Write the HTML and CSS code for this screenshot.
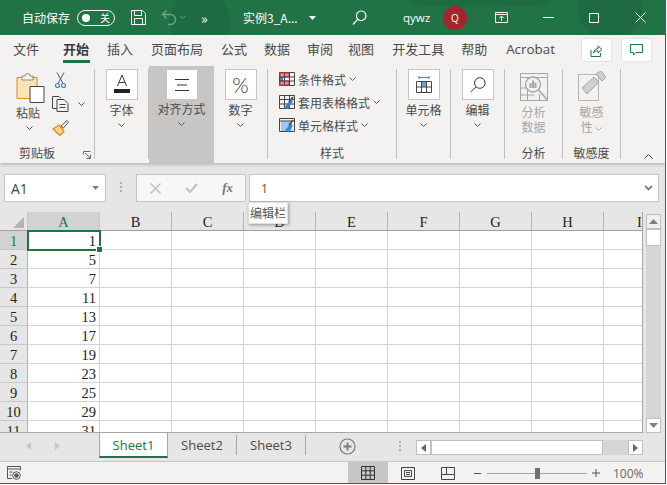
FILE: index.html
```html
<!DOCTYPE html>
<html lang="zh-CN">
<head>
<meta charset="utf-8">
<title>实例3 - Excel</title>
<link rel="stylesheet" href="styles.css">
</head>
<body>
<div class="app">
  <header class="titlebar">
    <span class="autosave">自动保存</span>
    <span class="toggle"><i class="knob"></i><span class="toggle-t">关</span></span>
    <svg class="save" width="17" height="17" viewBox="0 0 17 17" fill="none" stroke="#fff"><path d="M1.5 1.5h11l3 3v11h-14z"/><path d="M4.5 1.5v5h7v-5M4.5 15.5v-6h8v6"/></svg>
    <svg class="undo" width="16" height="17" viewBox="0 0 16 17" fill="none" stroke="#6fa787" stroke-width="1.3"><path d="M5.5 1.5 1.5 5.5l4 4M1.5 5.5h8a4.5 4.5 0 0 1 0 10H7"/></svg>
    <svg class="undo-c" width="7" height="5" viewBox="0 0 7 5" fill="none" stroke="#5b9a76"><path d="M.5.5l3 3 3-3"/></svg>
    <span class="more">»</span>
    <span class="doc">实例3_A...</span>
    <svg class="doc-c" width="7" height="4" viewBox="0 0 7 4"><path d="M0 0h7L3.5 4z" fill="#fff"/></svg>
    <svg class="search" width="15" height="16" viewBox="0 0 15 16" fill="none" stroke="#fff" stroke-width="1.2"><circle cx="9.2" cy="5.8" r="4.8"/><path d="M5.8 9.2 1 14.5"/></svg>
    <span class="user">qywz</span>
    <span class="avatar">Q</span>
    <svg class="display" width="13" height="11" viewBox="0 0 13 11" fill="none" stroke="#fff"><path d="M.5.500h12v10H.5zM.5 2.500h12M6.500 9V4.500M4.500 6l2-2 2 2"/></svg>
    <svg class="min" width="11" height="1" viewBox="0 0 11 1"><path d="M0 .5h11" stroke="#fff"/></svg>
    <svg class="max" width="10" height="10" viewBox="0 0 10 10" fill="none" stroke="#fff"><path d="M.5.500h9v9h-9z"/></svg>
    <svg class="close" width="11" height="11" viewBox="0 0 11 11" fill="none" stroke="#fff"><path d="M.5.500l10 10M10.500.5l-10 10"/></svg>
  </header>

  <nav class="tabs">
    <span class="tab t-file">文件</span>
    <span class="tab t-home">开始</span>
    <span class="tab t-ins">插入</span>
    <span class="tab t-page">页面布局</span>
    <span class="tab t-form">公式</span>
    <span class="tab t-data">数据</span>
    <span class="tab t-rev">审阅</span>
    <span class="tab t-view">视图</span>
    <span class="tab t-dev">开发工具</span>
    <span class="tab t-help">帮助</span>
    <span class="tab t-acro">Acrobat</span>
    <span class="tbtn t-share"><svg width="13" height="13" viewBox="0 0 13 13" fill="none" stroke="#217346"><path d="M1 6v6.500h9.500V9"/><path d="M3.500 9C4 6 6 4.500 8 4.500V2l4 3.500L8 9V6.800C6 6.800 4.500 7.500 3.500 9z"/></svg></span>
    <span class="tbtn t-comment"><svg width="13" height="12" viewBox="0 0 13 12" fill="none" stroke="#217346"><path d="M.5.500h12v8H6L3.500 11V8.500h-3z"/></svg></span>
  </nav>

  <section class="ribbon">
    <div class="grp g-clip"><div class="in">
      <div class="clip-row">
        <div class="paste">
          <svg width="29" height="30" viewBox="0 0 29 30"><path d="M1 4.500h20v21H1z" fill="#fde3b8" stroke="#e8871e"/><path d="M6 3h3a2.500 2.500 0 0 1 5 0h3v4H6z" fill="#f3f2f1" stroke="#8a8a8a"/><path d="M14 13.500h14v16H14z" fill="#fff" stroke="#444"/></svg>
          <span class="lb p-lb">粘贴</span>
          <svg class="chev" width="7" height="4" viewBox="0 0 7 4" fill="none" stroke="#555"><path d="M.5.500l3 3 3-3"/></svg>
        </div>
        <div class="clip-tools">
          <svg width="11" height="16" viewBox="0 0 11 16" fill="none"><path d="M2 .5l6 11M9 .5l-6 11" stroke="#555"/><circle cx="2.500" cy="13.500" r="2" stroke="#2b88d8" stroke-width="1.200"/><circle cx="8.500" cy="13.500" r="2" stroke="#2b88d8" stroke-width="1.200"/></svg>
          <div class="copy"><svg width="17" height="16" viewBox="0 0 17 16" fill="none" stroke="#444"><path d="M5 12.500H.5V.5H7l2 2"/><path d="M5 3.500h7l4 4v8H5zM7.500 8.500h6M7.500 11.500h6"/></svg><svg class="chev" width="7" height="4" viewBox="0 0 7 4" fill="none" stroke="#555"><path d="M.5.500l3 3 3-3"/></svg></div>
          <svg width="17" height="16" viewBox="0 0 17 16"><path d="M1 9l6-4 5 6-4 4.500z" fill="#fbd38d" stroke="#e8871e" stroke-width="1.300"/><path d="M9 6l6-5.500 1.500 1.500-5 6z" fill="#f3f2f1" stroke="#555"/></svg>
        </div>
      </div>
      <span class="lb g-lb">剪贴板</span>
      <svg class="launch" width="8" height="8" viewBox="0 0 8 8" fill="none" stroke="#666"><path d="M.5 3.500v-3h7M2 2l5 5M7.500 3.500v4h-4"/></svg>
    </div></div>

    <div class="grp g-font"><div class="in">
      <div class="box"><svg width="16" height="22" viewBox="0 0 16 22"><path d="M3.500 12 8 1l4.500 11M5 8.500h6" fill="none" stroke="#333"/><path d="M0 15h16v4H0z" fill="#222"/></svg></div>
      <span class="lb big-lb">字体</span>
      <svg class="chev-b" width="7" height="4" viewBox="0 0 7 4" fill="none" stroke="#555"><path d="M.5.500l3 3 3-3"/></svg>
    </div></div>

    <div class="grp g-align"><div class="in plain">
      <div class="box nob"><svg width="14" height="14" viewBox="0 0 14 14" stroke="#333"><path d="M0 1.500h14M2 7h10M0 12.500h14"/></svg></div>
      <span class="lb big-lb">对齐方式</span>
      <svg class="chev-b" width="7" height="4" viewBox="0 0 7 4" fill="none" stroke="#555"><path d="M.5.500l3 3 3-3"/></svg>
    </div></div>

    <div class="grp g-num"><div class="in">
      <div class="box pct">%</div>
      <span class="lb big-lb">数字</span>
      <svg class="chev-b" width="7" height="4" viewBox="0 0 7 4" fill="none" stroke="#555"><path d="M.5.500l3 3 3-3"/></svg>
    </div></div>

    <div class="grp g-style"><div class="in">
      <div class="style-list">
        <div class="srow"><svg width="16" height="14" viewBox="0 0 16 14" fill="none"><path d="M.5.500h15v13H.5z" stroke="#444"/><path d="M1 1h3v12H1z" fill="#2b88d8"/><path d="M1 1h9v4H1zM1 9h9v4H1z" fill="#f28a8a" stroke="#d13438"/><path d="M5.500 1v12M10.500 1v12M1 5h14M1 9h14" stroke="#444"/></svg><span>条件格式</span><svg class="chev" width="7" height="4" viewBox="0 0 7 4" fill="none" stroke="#555"><path d="M.5.500l3 3 3-3"/></svg></div>
        <div class="srow"><svg width="16" height="15" viewBox="0 0 16 15" fill="none"><path d="M.5.500h15v13H.5zM.5 4.500h15M.5 9h15M5.500 1v12M10.500 1v12" stroke="#444"/><path d="M5 13l6-8 3 1-5 8z" fill="#2b88d8"/><path d="M10 7l4-5" stroke="#555" stroke-width="2"/></svg><span>套用表格格式</span><svg class="chev" width="7" height="4" viewBox="0 0 7 4" fill="none" stroke="#555"><path d="M.5.500l3 3 3-3"/></svg></div>
        <div class="srow"><svg width="16" height="15" viewBox="0 0 16 15" fill="none"><path d="M2 3h11v10H2z" fill="#9cc9ef"/><path d="M.5.500h15v13H.5zM.5 3h15" stroke="#444"/><path d="M6 13l5-7 3 1-4 7z" fill="#2b88d8"/><path d="M10 7l4-5" stroke="#555" stroke-width="2"/></svg><span>单元格样式</span><svg class="chev" width="7" height="4" viewBox="0 0 7 4" fill="none" stroke="#555"><path d="M.5.500l3 3 3-3"/></svg></div>
      </div>
      <span class="lb g-lb">样式</span>
    </div></div>

    <div class="grp g-cell"><div class="in">
      <div class="box"><svg width="16" height="17" viewBox="0 0 16 17" fill="none"><path d="M5.500 5h5v6h-5z" fill="#5ea7e4"/><path d="M.5 5.500h15v11H.5zM.5 11h15M5.500 5.500v11M10.500 5.500v11" stroke="#444"/><path d="M3 1.500h10M3 0v3M13 0v3" stroke="#2b88d8"/></svg></div>
      <span class="lb big-lb">单元格</span>
      <svg class="chev-b" width="7" height="4" viewBox="0 0 7 4" fill="none" stroke="#555"><path d="M.5.500l3 3 3-3"/></svg>
    </div></div>

    <div class="grp g-edit"><div class="in">
      <div class="box"><svg width="16" height="16" viewBox="0 0 16 16" fill="none" stroke="#333"><circle cx="9.800" cy="6" r="5.300"/><path d="M6 10 .5 15"/></svg></div>
      <span class="lb big-lb">编辑</span>
      <svg class="chev-b" width="7" height="4" viewBox="0 0 7 4" fill="none" stroke="#555"><path d="M.5.500l3 3 3-3"/></svg>
    </div></div>

    <div class="grp g-ana"><div class="in">
      <svg class="ana-i" width="28" height="28" viewBox="0 0 28 28" fill="none"><path d="M.5.500h27v27H.5zM.5 4.500h27M.5 15h10M.5 22h14M7.500 5v22M19.500 21v6" stroke="#a6a6a6"/><circle cx="13" cy="11.500" r="7.500" fill="#f3f2f1" stroke="#a6a6a6" stroke-width="1.300"/><path d="M9.500 10h2v5h-2zM12 7.500h2V15h-2zM14.500 9.500h2V15h-2z" fill="#a6a6a6"/><path d="M18.500 17l8.500 9.500" stroke="#a6a6a6" stroke-width="1.600"/></svg>
      <span class="lb dim d1">分析</span>
      <span class="lb dim d2">数据</span>
      <span class="lb g-lb">分析</span>
    </div></div>

    <div class="grp g-sens"><div class="in">
      <svg class="sens-i" width="28" height="30" viewBox="0 0 28 30" fill="none"><path d="M.5 3.500h20v26H.5z" fill="#f3f2f1" stroke="#b5b5b5"/><path d="M4 17 16 6l5 5L9 23z" fill="#d0d0d0" stroke="#a6a6a6"/><path d="M18 3l5-3 5 6-4 4z" fill="#d0d0d0" stroke="#a6a6a6"/></svg>
      <span class="lb dim d1">敏感</span>
      <span class="lb dim d2">性 <svg width="7" height="4" viewBox="0 0 7 4" fill="none" stroke="#a6a6a6"><path d="M.5.500l3 3 3-3"/></svg></span>
      <span class="lb g-lb">敏感度</span>
    </div></div>

    <div class="g-end"><svg width="9" height="5" viewBox="0 0 9 5" fill="none" stroke="#444"><path d="M.5 4.500l4-4 4 4"/></svg></div>
  </section>

  <section class="fbar">
    <div class="namebox"><span>A1</span><svg width="7" height="4" viewBox="0 0 7 4"><path d="M0 0h7L3.500 4z" fill="#808080"/></svg></div>
    <div class="dots"><i></i><i></i><i></i></div>
    <div class="fctl">
      <svg width="11" height="11" viewBox="0 0 11 11" fill="none" stroke="#c0c0c0" stroke-width="1.500"><path d="M.5.500l10 10M10.500.5l-10 10"/></svg>
      <svg width="13" height="10" viewBox="0 0 13 10" fill="none" stroke="#c0c0c0" stroke-width="2"><path d="M1 5l4 4 7-8"/></svg>
      <span class="fx">fx</span>
    </div>
    <div class="finput"><span class="fval">1</span><svg width="9" height="6" viewBox="0 0 9 6" fill="none" stroke="#808080" stroke-width="1.800"><path d="M1 1l3.500 3.500L8 1"/></svg></div>
    <div class="tip">编辑栏</div>
  </section>

  <section class="sheet">
    <div class="grid-wrap">
      <table class="grid">
        <thead><tr><th class="corner"><i class="tri"></i></th><th class="on">A</th><th>B</th><th>C</th><th>D</th><th>E</th><th>F</th><th>G</th><th>H</th><th class="last">I</th></tr></thead>
        <tbody>
          <tr><th class="on">1</th><td class="sel">1<i class="handle"></i></td><td></td><td></td><td></td><td></td><td></td><td></td><td></td><td></td></tr>
          <tr><th>2</th><td>5</td><td></td><td></td><td></td><td></td><td></td><td></td><td></td><td></td></tr>
          <tr><th>3</th><td>7</td><td></td><td></td><td></td><td></td><td></td><td></td><td></td><td></td></tr>
          <tr><th>4</th><td>11</td><td></td><td></td><td></td><td></td><td></td><td></td><td></td><td></td></tr>
          <tr><th>5</th><td>13</td><td></td><td></td><td></td><td></td><td></td><td></td><td></td><td></td></tr>
          <tr><th>6</th><td>17</td><td></td><td></td><td></td><td></td><td></td><td></td><td></td><td></td></tr>
          <tr><th>7</th><td>19</td><td></td><td></td><td></td><td></td><td></td><td></td><td></td><td></td></tr>
          <tr><th>8</th><td>23</td><td></td><td></td><td></td><td></td><td></td><td></td><td></td><td></td></tr>
          <tr><th>9</th><td>25</td><td></td><td></td><td></td><td></td><td></td><td></td><td></td><td></td></tr>
          <tr><th>10</th><td>29</td><td></td><td></td><td></td><td></td><td></td><td></td><td></td><td></td></tr>
          <tr><th>11</th><td>31</td><td></td><td></td><td></td><td></td><td></td><td></td><td></td><td></td></tr>
        </tbody>
      </table>
    </div>
    <div class="vscroll">
      <span class="sb-btn"><svg width="9" height="5" viewBox="0 0 9 5"><path d="M0 5l4.500-5L9 5z" fill="#808080"/></svg></span>
      <span class="sb-thumb"></span>
      <span class="sb-track"></span>
      <span class="sb-btn"><svg width="9" height="5" viewBox="0 0 9 5"><path d="M0 0l4.500 5L9 0z" fill="#808080"/></svg></span>
    </div>
  </section>

  <section class="sheettabs">
    <div class="nav">
      <svg width="5" height="8" viewBox="0 0 5 8"><path d="M5 0v8L0 4z" fill="#c6c6c6"/></svg>
      <svg width="5" height="8" viewBox="0 0 5 8"><path d="M0 0v8l5-4z" fill="#c6c6c6"/></svg>
    </div>
    <span class="stab active">Sheet1</span>
    <span class="stab">Sheet2</span>
    <span class="stab">Sheet3</span>
    <svg class="add" width="17" height="17" viewBox="0 0 17 17" fill="none" stroke="#7a7a7a"><circle cx="8.500" cy="8.500" r="7.500" stroke-width="1.200"/><path d="M8.500 4.500v8M4.500 8.500h8" stroke-width="1.800"/></svg>
    <div class="dots small"><i></i><i></i><i></i></div>
    <div class="hscroll">
      <span class="hb"><svg width="5" height="8" viewBox="0 0 5 8"><path d="M5 0v8L0 4z" fill="#666"/></svg></span>
      <span class="hthumb"></span>
      <span class="htrack"></span>
      <span class="hb"><svg width="5" height="8" viewBox="0 0 5 8"><path d="M0 0v8l5-4z" fill="#666"/></svg></span>
    </div>
  </section>

  <footer class="status">
    <svg class="macro" width="14" height="14" viewBox="0 0 14 14" fill="none" stroke="#555"><path d="M5 12.500H.5V.5h13v4M.5 3h13M2.500 6h3M2.500 9h2"/><circle cx="9.500" cy="9.500" r="3.800"/><circle cx="9.500" cy="9.500" r="1.800" fill="#555"/></svg>
    <span class="view on-view"><svg width="14" height="14" viewBox="0 0 14 14" fill="none" stroke="#333"><path d="M.5.500h13v13H.5zM.5 4.800h13M.5 9.200h13M4.800.5v13M9.200.5v13"/></svg></span>
    <span class="view"><svg width="14" height="13" viewBox="0 0 14 13" fill="none" stroke="#444"><path d="M.5.500h13v12H.5zM3.500 3.500h7v6h-7zM5 5.500h4M5 7.500h4"/></svg></span>
    <span class="view"><svg width="14" height="13" viewBox="0 0 14 13" fill="none" stroke="#444"><path d="M.5.500h13v12H.5zM.5 7.500h13M5.500.5v7"/></svg></span>
    <span class="zm-minus"></span>
    <span class="slider"><i class="s-thumb"></i></span>
    <svg class="zm-plus" width="8" height="8" viewBox="0 0 8 8" stroke="#555"><path d="M0 4h8M4 0v8"/></svg>
    <span class="zoom-t">100%</span>
  </footer>
</div>
</body>
</html>
```

FILE: styles.css
```css
* { box-sizing: border-box; }
html, body { margin: 0; padding: 0; background: #fff; }
body { font-family: "Noto Sans CJK SC", "Noto Sans", sans-serif; color: #444; overflow: hidden; }
.app { width: 666px; height: 484px; display: flex; flex-direction: column; border-right: 1px solid #217346; border-bottom: 1px solid #217346; overflow: hidden; position: relative; background: #e6e6e6; }

/* title bar */
.titlebar { height: 35px; flex: none; display: flex; align-items: center; color: #fff; font-size: 12px;
  background:
    radial-gradient(circle at 200px 22px, #1e6b41 0 30px, transparent 31px),
    radial-gradient(ellipse at 480px 2px, #1e6b41 0 70px, transparent 71px),
    radial-gradient(circle at 610px 8px, #1e6b41 0 32px, transparent 33px),
    #217346; }
.autosave { margin-left: 22px; width: 48px; white-space: nowrap; }
.toggle { margin-left: 7px; width: 38px; height: 16px; border: 1px solid #fff; border-radius: 8px; display: flex; align-items: center; justify-content: space-between; padding: 0 4px; flex: none; }
.knob { width: 8px; height: 8px; background: #fff; border-radius: 50%; }
.toggle-t { font-size: 10px; line-height: 14px; }
.save { margin-left: 15px; flex: none; }
.undo { margin-left: 14px; flex: none; }
.undo-c { margin-left: 2px; flex: none; }
.more { margin-left: 15px; font-size: 14px; line-height: 16px; width: 8px; }
.doc { margin-left: 34px; width: 55px; white-space: nowrap; font-size: 12px; }
.doc-c { margin-left: 11px; flex: none; }
.search { margin-left: 36px; flex: none; }
.user { margin-left: 36px; width: 30px; font-family: "Open Sans", sans-serif; font-size: 11.500px; }
.avatar { margin-left: 10px; width: 24px; height: 24px; background: #a4262c; border-radius: 50%; display: flex; align-items: center; justify-content: center; font-size: 10px; flex: none; font-family: "Open Sans", sans-serif; }
.display { margin-left: 28px; flex: none; }
.min { margin-left: 35px; flex: none; }
.max { margin-left: 35px; flex: none; }
.close { margin-left: 36px; flex: none; }

/* ribbon tabs */
.tabs { height: 31px; flex: none; background: #f3f2f1; display: flex; align-items: flex-start; font-size: 13px; }
.tab { line-height: 28px; white-space: nowrap; color: #4a4a4a; position: relative; }
.t-file { margin-left: 13px; }
.t-home { margin-left: 24px; font-weight: 700; color: #3a3a3a; padding: 0 0 4px; }
.t-home::after { content: ""; position: absolute; left: 0; right: -1px; top: 25px; height: 3px; background: #217346; }
.t-ins { margin-left: 18px; }
.t-page { margin-left: 18px; }
.t-form { margin-left: 18px; }
.t-data { margin-left: 17px; }
.t-rev { margin-left: 17px; }
.t-view { margin-left: 15px; }
.t-dev { margin-left: 18px; }
.t-help { margin-left: 17px; }
.t-acro { margin-left: 19px; width: 48px; font-family: "Open Sans", sans-serif; font-size: 13.400px; }
.tbtn { width: 31px; height: 24px; margin-top: 3px; background: #fff; border: 1px solid #e6e4e2; border-radius: 2px; display: flex; align-items: center; justify-content: center; flex: none; }
.t-share { margin-left: 27px; }
.t-comment { margin-left: 9px; }

/* ribbon */
.ribbon { height: 97px; flex: none; display: flex; background: #f3f2f1; box-shadow: 0 2px 3px rgba(0,0,0,.18); position: relative; z-index: 2; }
.grp { height: 97px; padding: 3px 0 4px; flex: none; }
.in { height: 90px; border-right: 1px solid #bfbfbf; display: flex; flex-direction: column; align-items: center; position: relative; }
.in.plain { border-right: 0; }
.g-clip { width: 95px; } .g-font { width: 54px; } .g-align { width: 65px; background: #c8c6c4; }
.g-num { width: 54px; } .g-style { width: 129px; } .g-cell { width: 54px; } .g-edit { width: 54px; }
.g-ana { width: 58px; } .g-sens { width: 58px; }
.g-end { flex: 1; display: flex; align-items: flex-end; justify-content: flex-end; padding: 0 12px 4px 0; }
.lb { font-size: 12px; line-height: 15px; color: #4a4a4a; white-space: nowrap; }
.g-lb { margin-top: auto; margin-bottom: -1px; }
.big-lb { margin-top: 2px; }
.chev-b { margin-top: 6px; }
.box { width: 32px; height: 31px; background: #fff; border: 1px solid #c8c6c4; display: flex; align-items: center; justify-content: center; flex: none; }
.box.nob { border: 0; margin-top: 1px; width: 30px; height: 29px; }
.g-align .big-lb { margin-top: 2px; }
.pct { font-size: 21px; font-family: "Lato", "Liberation Sans", sans-serif; font-weight: 300; color: #333; }

/* clipboard */
.clip-row { display: flex; width: 100%; padding-left: 16px; height: 74px; }
.paste { width: 36px; padding-top: 4px; display: flex; flex-direction: column; align-items: flex-start; }
.p-lb { margin-top: 2px; }
.paste .chev { margin: 6px 0 0 10px; }
.clip-tools { display: flex; flex-direction: column; padding-top: 3px; gap: 8px; }
.clip-tools > svg:first-child { margin-left: 3px; }
.copy { display: flex; align-items: center; gap: 9px; height: 16px; }
.g-clip .g-lb { margin-right: 20px; }
.launch { position: absolute; right: 3px; bottom: 0; }

/* styles list */
.style-list { width: 100%; padding: 1px 0 0 11px; display: flex; flex-direction: column; gap: 5px; }
.srow { display: flex; align-items: center; font-size: 12px; height: 18px; color: #4a4a4a; white-space: nowrap; }
.srow span { margin-left: 3px; margin-right: 3px; }

.ana-i { margin-top: 4px; flex: none; }
.sens-i { margin-top: 2px; flex: none; }
.dim { color: #a6a6a6; }
.d1 { margin-top: 3px; }
.d2 svg { vertical-align: middle; }

/* formula bar */
.fbar { height: 49px; flex: none; position: relative; display: flex; padding: 11px 0 0 4px; align-items: flex-start; background: #e6e6e6; }
.namebox { width: 102px; height: 28px; background: #fff; border: 1px solid #c8c6c4; display: flex; align-items: center; justify-content: space-between; padding: 0 6px; font-family: "Open Sans", sans-serif; font-size: 14px; }
.dots { display: flex; flex-direction: column; gap: 2px; width: 2px; margin: 8px 14px 0 14px; flex: none; }
.dots i { width: 2px; height: 2px; background: #b0b0b0; display: block; }
.fctl { width: 110px; height: 28px; background: #f7f7f7; border: 1px solid #c8c6c4; display: flex; align-items: center; justify-content: space-between; padding: 0 12px 0 13px; flex: none; }
.fx { font-family: "Liberation Serif", serif; font-style: italic; font-weight: 700; font-size: 13px; color: #777; }
.finput { width: 410px; height: 28px; margin-left: 3px; background: #fff; border: 1px solid #c8c6c4; display: flex; align-items: center; justify-content: space-between; padding: 0 5px 0 11px; flex: none; }
.fval { font-family: "Open Sans", sans-serif; font-size: 12px; color: #7a4a20; }
.tip { position: absolute; left: 248px; top: 39px; width: 40px; height: 22px; background: #fff; font-size: 12px; line-height: 20px; text-align: center; color: #555; box-shadow: 1px 1px 3px rgba(0,0,0,.35); z-index: 5; border: 1px solid #e0e0e0; white-space: nowrap; }

/* sheet */
.sheet { flex: none; height: 221px; display: flex; background: #e6e6e6; }
.grid-wrap { width: 643px; height: 221px; overflow: hidden; flex: none; border-right: 1px solid #a6a6a6; border-bottom: 1px solid #a6a6a6; }
.grid { border-collapse: separate; border-spacing: 0; table-layout: fixed; width: 676px; font-family: "Liberation Serif", serif; font-size: 14.500px; color: #222; }
.grid th, .grid td { padding: 3px 0 0; font-weight: 400; width: 72px; height: 19px; line-height: 15px; }
.grid thead th { height: 19px; text-align: center; vertical-align: top; background: #e6e6e6; border-right: 1px solid #b5b5b5; border-bottom: 1px solid #a0a0a0; }
.grid th:first-child { width: 28px; }
.grid thead .corner { border-right: 1px solid #c8c8c8; position: relative; }
.grid thead .on { background: #d2d2d2; color: #217346; border-right: 1px solid #c8c8c8; }
.tri { position: absolute; right: 3px; bottom: 2px; width: 0; height: 0; border-left: 11px solid transparent; border-bottom: 11px solid #b4b4b4; }
.grid tbody th { background: #e6e6e6; text-align: center; border-right: 1px solid #b5b5b5; border-bottom: 1px solid #c8c8c8; }
.grid tbody th.on { background: #d2d2d2; color: #217346; }
.grid td { background: #fff; text-align: right; padding-right: 3px; border-right: 1px solid #d4d4d4; border-bottom: 1px solid #d4d4d4; position: relative; }
.grid td.sel { outline: 2px solid #217346; outline-offset: -1px; z-index: 1; }
.handle { position: absolute; right: -4px; bottom: -4px; background: #217346; border: 1px solid #fff; box-sizing: content-box; width: 5px; height: 5px; z-index: 2; }

.vscroll { width: 15px; margin: 2px 0 0 3px; display: flex; flex-direction: column; flex: none; background: #d6d6d6; }
.sb-btn { height: 15px; background: #fff; border: 1px solid #c0c0c0; display: flex; align-items: center; justify-content: center; flex: none; }
.vscroll .sb-btn:first-child { background: #f0f0f0; }
.sb-thumb { height: 17px; background: #fff; border: 1px solid #c0c0c0; flex: none; }
.sb-track { flex: 1; }

/* sheet tabs */
.sheettabs { height: 28px; flex: none; display: flex; align-items: flex-start; background: #e6e6e6; position: relative; }
.nav { width: 99px; height: 25px; display: flex; align-items: center; padding-left: 26px; gap: 24px; flex: none; }
.stab { width: 69px; display: flex; align-items: center; justify-content: center; font-family: "Open Sans", sans-serif; font-size: 13px; color: #4a4a4a; border-right: 1px solid #a6a6a6; flex: none; margin-top: 2px; height: 20px; }
.stab.active { height: 25px; margin-top: 0; background: #fff; color: #217346; border-left: 1px solid #a6a6a6; border-right: 1px solid #a6a6a6; border-bottom: 2px solid #217346; }
.add { margin: 5px 0 0 33px; flex: none; }
.dots.small { margin: 8px 0 0 43px; }
.hscroll { margin: 7px 0 0 15px; width: 227px; height: 15px; display: flex; flex: none; background: #d6d6d6; }
.hb { width: 15px; background: #fff; border: 1px solid #c0c0c0; display: flex; align-items: center; justify-content: center; flex: none; }
.hthumb { width: 172px; background: #fff; border: 1px solid #c0c0c0; flex: none; }
.htrack { flex: 1; }

/* status bar */
.status { flex: 1; display: flex; align-items: center; background: #f3f2f1; border-top: 1px solid #c8c8c8; }
.macro { margin-left: 7px; flex: none; }
.view { width: 40px; height: 22px; display: flex; align-items: center; justify-content: center; flex: none; }
.on-view { margin-left: 327px; background: #c8c6c4; }
.zm-minus { width: 7px; height: 1px; background: #555; margin-left: 6px; flex: none; }
.slider { width: 100px; height: 1px; background: #a6a6a6; margin-left: 6px; position: relative; flex: none; }
.s-thumb { position: absolute; left: 48px; top: -5px; width: 5px; height: 11px; background: #707070; }
.zm-plus { margin-left: 5px; flex: none; }
.zoom-t { margin-left: 13px; font-family: "Open Sans", sans-serif; font-size: 12px; color: #666; }
```
